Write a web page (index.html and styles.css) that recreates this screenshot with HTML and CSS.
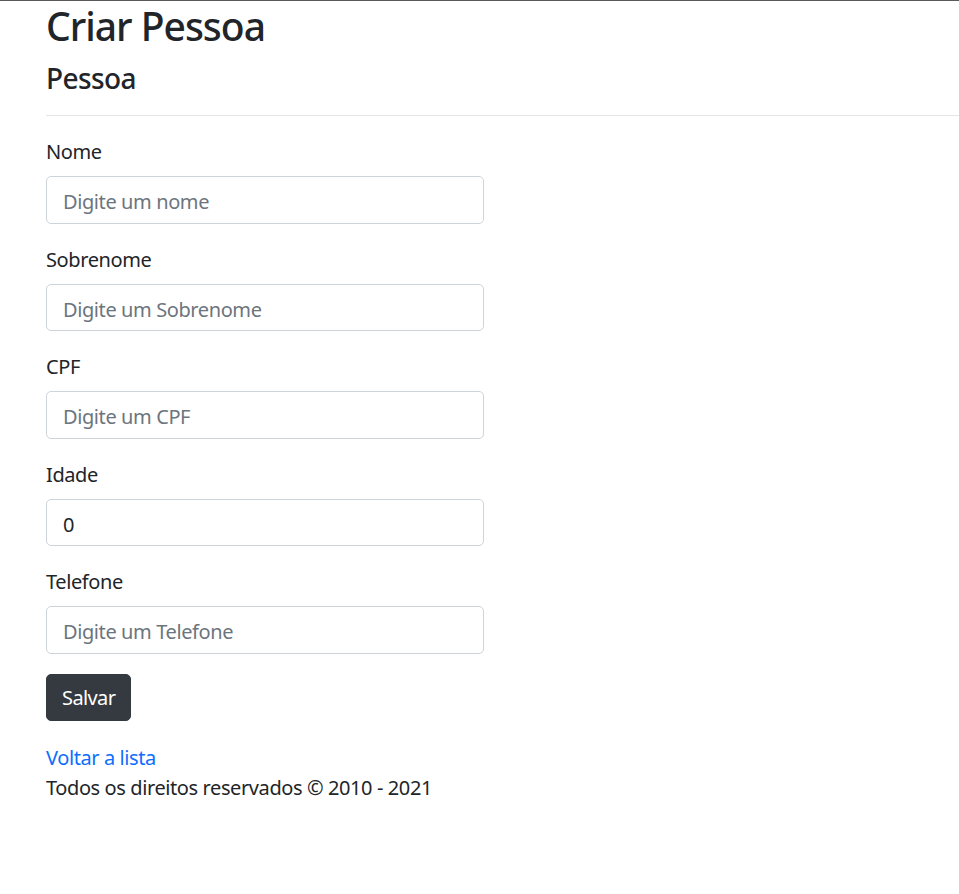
FILE: index.html
```html
<!DOCTYPE html>
<html lang="pt-br">
<head>
<meta charset="utf-8">
<title>Criar Pessoa</title>
<link rel="stylesheet" href="styles.css">
</head>
<body>
<main class="page">
  <h1 class="title">Criar Pessoa</h1>
  <h4 class="subtitle">Pessoa</h4>
  <hr class="divider">
  <form class="form">
    <div class="group">
      <label class="label" for="nome">Nome</label>
      <input class="control" id="nome" type="text" placeholder="Digite um nome">
    </div>
    <div class="group">
      <label class="label" for="sobrenome">Sobrenome</label>
      <input class="control" id="sobrenome" type="text" placeholder="Digite um Sobrenome">
    </div>
    <div class="group">
      <label class="label" for="cpf">CPF</label>
      <input class="control" id="cpf" type="text" placeholder="Digite um CPF">
    </div>
    <div class="group">
      <label class="label" for="idade">Idade</label>
      <input class="control" id="idade" type="text" value="0">
    </div>
    <div class="group">
      <label class="label" for="telefone">Telefone</label>
      <input class="control" id="telefone" type="text" placeholder="Digite um Telefone">
    </div>
    <button class="btn" type="button">Salvar</button>
  </form>
  <div class="back"><a class="link" href="#">Voltar a lista</a></div>
  <footer class="footer">Todos os direitos reservados © 2010 - 2021</footer>
</main>
</body>
</html>
```
FILE: styles.css
```css
html, body {
  margin: 0;
  padding: 0;
  background: #fff;
}
body {
  border-top: 1px solid #595959;
  font-family: "Noto Sans", "Open Sans", sans-serif;
  font-size: 20px;
  line-height: 30px;
  letter-spacing: -0.4px;
  color: #212529;
}
.page {
  padding-left: 46px;
}
.title {
  margin: 0 0 10px;
  font-size: 39px;
  line-height: 50px;
  font-weight: 500;
  letter-spacing: -1px;
}
.subtitle {
  margin: 0 0 10px;
  font-size: 28px;
  line-height: 34px;
  font-weight: 500;
  letter-spacing: -0.6px;
}
.divider {
  margin: 20px 0 20px;
  border: 0;
  border-top: 1px solid #e4e5e6;
}
.form {
  margin: 0;
}
.group {
  display: flex;
  flex-direction: column;
  align-items: flex-start;
  margin-bottom: 20px;
}
.label {
  display: block;
  padding-top: 1px;
  margin-bottom: 9px;
  line-height: 30px;
}
.control {
  box-sizing: border-box;
  width: 438px;
  height: 47.5px;
  padding: 9px 16px 5px;
  font-family: inherit;
  font-size: 20px;
  line-height: 30px;
  letter-spacing: -0.4px;
  color: #212529;
  background: #fff;
  border: 1px solid #ced4da;
  border-radius: 5px;
  outline: none;
}
.control::placeholder {
  color: #6c757d;
  opacity: 1;
}
.btn {
  display: block;
  box-sizing: border-box;
  height: 47px;
  padding: 8px 15px 6px;
  font-family: inherit;
  font-size: 20px;
  line-height: 30px;
  letter-spacing: -0.6px;
  color: #fff;
  background: #343a40;
  border: 1px solid #343a40;
  border-radius: 5px;
  cursor: pointer;
}
.back {
  margin-top: 21px;
  padding-top: 1px;
}
.link {
  color: #0d6efd;
  text-decoration: none;
}
.footer {
  line-height: 30px;
}
```
